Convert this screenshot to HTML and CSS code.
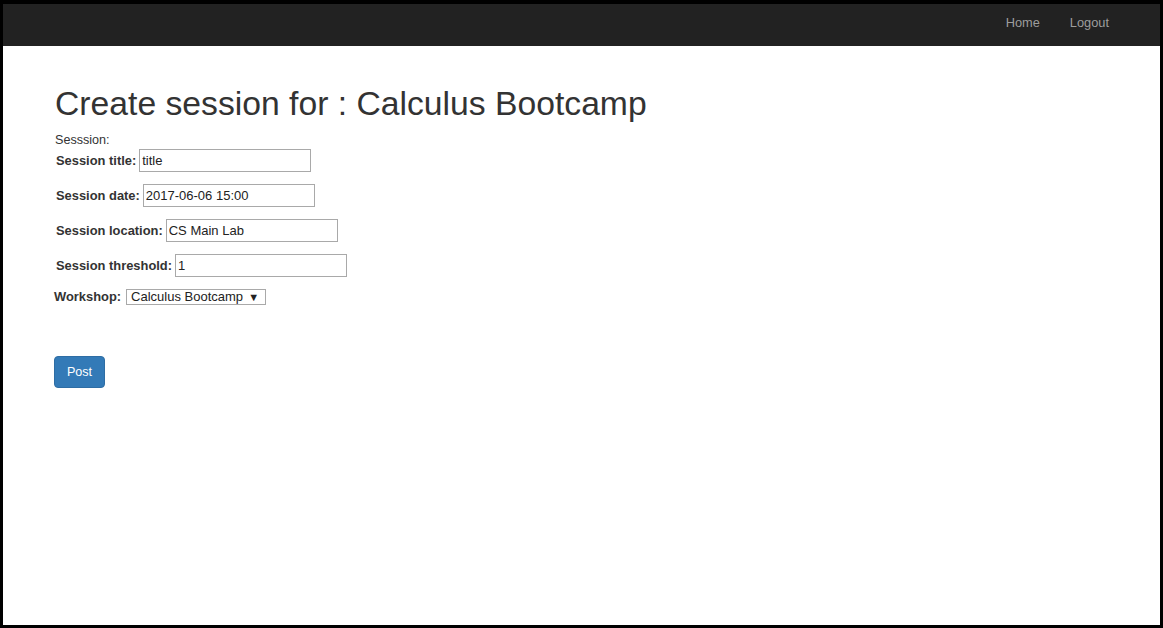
FILE: index.html
```html
<!DOCTYPE html>
<html lang="en">
<head>
<meta charset="utf-8">
<title>Create session</title>
<link rel="stylesheet" href="styles.css">
</head>
<body>
<div class="frame">
  <nav class="navbar">
    <a class="nav-link" href="#">Home</a>
    <a class="nav-link" href="#">Logout</a>
  </nav>
  <main class="main">
    <h1 class="title">Create session for : Calculus Bootcamp</h1>
    <form class="form">
      <div class="legend">Sesssion:</div>
      <div class="fields">
        <div class="field"><label class="label" for="t">Session title:</label><input class="input" id="t" type="text" value="title"></div>
        <div class="field"><label class="label" for="d">Session date:</label><input class="input" id="d" type="text" value="2017-06-06 15:00"></div>
        <div class="field"><label class="label" for="l">Session location:</label><input class="input" id="l" type="text" value="CS Main Lab"></div>
        <div class="field"><label class="label" for="h">Session threshold:</label><input class="input" id="h" type="text" value="1"></div>
        <div class="field field-select"><label class="label" for="w">Workshop:</label><span class="select-wrap"><select class="select" id="w"><option>Calculus Bootcamp</option></select></span></div>
      </div>
      <button class="btn" type="button">Post</button>
    </form>
  </main>
</div>
</body>
</html>
```
FILE: styles.css
```css
html, body {
  margin: 0;
  padding: 0;
}

.frame {
  box-sizing: border-box;
  width: 1163px;
  height: 628px;
  border-style: solid;
  border-color: #000;
  border-width: 4px 3px 3px 3px;
  background: #fff;
  font-family: "Liberation Sans", Arial, sans-serif;
  font-size: 12.6px;
  line-height: 18px;
  color: #333;
}

.navbar {
  height: 42px;
  background: #222;
  display: flex;
  justify-content: flex-end;
  align-items: flex-start;
  padding-right: 36px;
}

.nav-link {
  color: #9d9d9d;
  text-decoration: none;
  padding: 10px 15px 0;
  font-size: 12.8px;
  line-height: 18px;
}

.main {
  padding-left: 51px;
}

.title {
  margin: 39px 0 8px 1px;
  font-size: 33.7px;
  line-height: 37px;
  font-weight: 400;
  color: #333;
}

.legend {
  padding-left: 1px;
  height: 18px;
  position: relative;
  top: 1px;
}

.fields {
  display: flex;
  flex-direction: column;
  gap: 12px;
  margin-top: 1px;
}

.field {
  display: flex;
  align-items: center;
  gap: 3px;
  height: 23px;
  padding-left: 2px;
}

.field-select {
  height: 18px;
  padding-left: 0;
  margin-top: -1px;
}

.label {
  font-weight: 700;
  font-size: 12.9px;
  line-height: 18px;
}

.input {
  box-sizing: border-box;
  width: 172px;
  height: 23px;
  margin: 0;
  padding: 0 2px;
  border: 1px solid #a9a9a9;
  border-radius: 0;
  font-family: "Liberation Sans", Arial, sans-serif;
  font-size: 13px;
  color: #222;
  background: #fff;
}

.select-wrap {
  position: relative;
  display: inline-block;
  margin-top: -1px;
  margin-left: 2px;
}

.select {
  box-sizing: border-box;
  appearance: none;
  -webkit-appearance: none;
  width: 140px;
  height: 16px;
  margin: 0;
  padding: 0 0 0 4px;
  border: 1px solid #a9a9a9;
  border-radius: 0;
  background: #fff;
  font-family: "Liberation Sans", Arial, sans-serif;
  font-size: 13px;
  line-height: 14px;
  color: #222;
  display: block;
}

.select-wrap::after {
  content: "\25BC";
  position: absolute;
  right: 7px;
  top: 1px;
  font-size: 11px;
  line-height: 14px;
  color: #222;
  pointer-events: none;
}

.btn {
  display: block;
  box-sizing: border-box;
  margin-top: 50px;
  width: 51px;
  height: 32px;
  padding: 0;
  background: #337ab7;
  border: 1px solid #2e6da4;
  border-radius: 4px;
  color: #fff;
  font-family: "Liberation Sans", Arial, sans-serif;
  font-size: 12.6px;
  line-height: 18px;
  cursor: pointer;
}
```
